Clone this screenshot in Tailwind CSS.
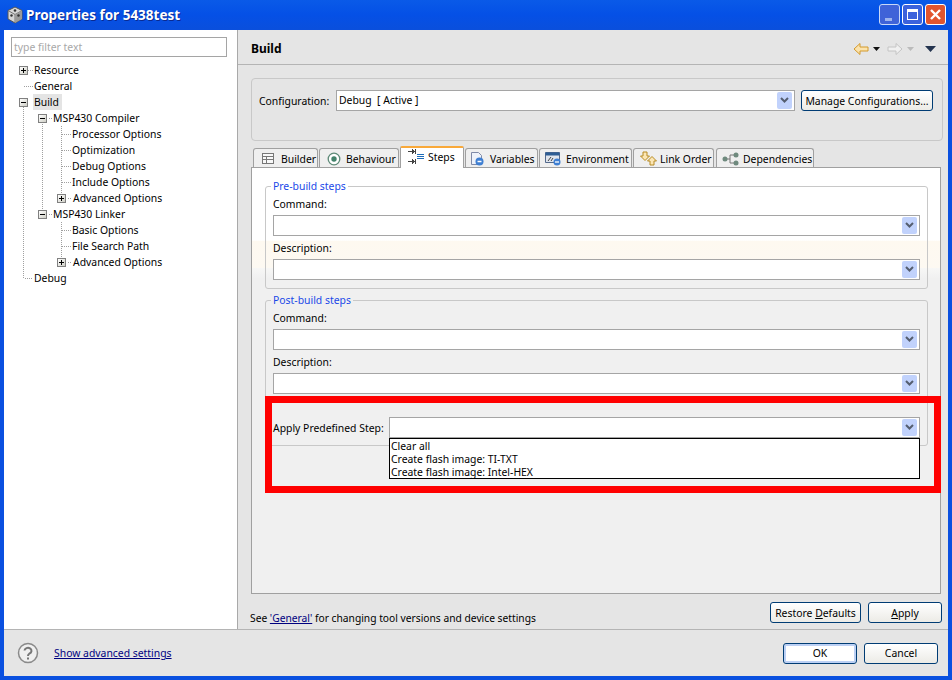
<!doctype html>
<html><head><meta charset="utf-8">
<script src="https://cdn.jsdelivr.net/npm/@tailwindcss/browser@4"></script>
</head>
<body class="m-0 overflow-hidden">
<div class="relative w-[952px] h-[680px] flex flex-col bg-[#0a50e0] font-['Noto_Sans',sans-serif] text-[10.4px] leading-[14px] text-black overflow-hidden">
  <!-- title bar -->
  <div class="h-[30px] shrink-0 flex items-center pl-[6px] pr-[6px] bg-gradient-to-b from-[#0a5ae8] via-[#0550e6] to-[#0a4fdc] text-white">
    <svg width="18" height="18" viewBox="0 0 18 18" class="mr-[2px]"><path d="M9 1l7 3.500v8.500l-7 4-7-4V4.500z" fill="#d6d6d6" stroke="#555"/><path d="M2 4.500l7 4 7-4M9 8.500V17" fill="none" stroke="#777"/><path d="M9 8.500l7-4v8.500l-7 4z" fill="#9a9a9a"/><circle cx="9" cy="4.500" r="1.300" fill="#333"/><circle cx="5.500" cy="9.500" r="1.200" fill="#333"/><circle cx="12.500" cy="9.500" r="1.200" fill="#333"/></svg>
    <span class="font-bold text-[13.5px] [text-shadow:1px_1px_0_#0a2a90]">Properties for 5438test</span>
    <div class="ml-auto flex gap-[2px] mb-[1px]">
      <div class="w-[21px] h-[21px] rounded-[3px] border border-[#c8d8f8] bg-[#3f63d8] flex items-end justify-start pl-[5px] pb-[3px]"><div class="w-[7px] h-[3px] bg-[#9db4ee]"></div></div>
      <div class="w-[21px] h-[21px] rounded-[3px] border border-white bg-[#3c62dc] flex items-center justify-center"><div class="w-[11px] h-[11px] border border-white border-t-[3px]"></div></div>
      <div class="w-[21px] h-[21px] rounded-[3px] border border-white bg-[#e2552e] flex items-center justify-center"><svg width="13" height="13" viewBox="0 0 13 13"><path d="M2 2l9 9M11 2l-9 9" stroke="#fff" stroke-width="2.400"/></svg></div>
    </div>
  </div>
  <!-- body -->
  <div class="flex-1 mx-[4px] mb-[4px] flex flex-col bg-[#e5e5e5] min-h-0">
    <div class="flex flex-1 min-h-0">
      <!-- left tree -->
      <div class="relative w-[234px] shrink-0 bg-white border-r border-[#a9a9a9] pt-[7px]">
        <div class="ml-[7px] w-[216px] h-[20px] border border-[#a5a5a5] px-[2px] flex items-center text-[#a8a8a8]">type filter text</div>
        <svg class="absolute left-0 top-0" width="233" height="290" shape-rendering="crispEdges">
          <g stroke="#a0a0a0" stroke-dasharray="1 1" fill="none">
            <path d="M19.500 75V248H29M19.500 56H29"/>
            <path d="M19.500 40H29"/>
            <path d="M38.500 94V184M45 88H49M45 184H49"/>
            <path d="M57.500 96V168M57.500 104H67M57.500 120H67M57.500 136H67M57.500 152H67"/>
            <path d="M57.500 192V232M57.500 200H67M57.500 216H67M64 168H68M64 232H68"/>
          </g>
        </svg>
        <div class="relative mt-[5px] flex flex-col">
          <div class="flex items-center h-[16px] pl-[15px]"><span class="w-[9px] h-[9px] border border-[#808080] bg-gradient-to-br from-white to-[#cfcfc6] flex items-center justify-center"><svg width="7" height="7" viewBox="0 0 7 7" shape-rendering="crispEdges"><path d="M1 3.500h5M3.500 1v5" stroke="#000"/></svg></span><span class="ml-[6px]">Resource</span></div>
          <div class="flex items-center h-[16px] pl-[30px]"><span>General</span></div>
          <div class="flex items-center h-[16px] pl-[15px]"><span class="w-[9px] h-[9px] border border-[#808080] bg-gradient-to-br from-white to-[#cfcfc6] flex items-center justify-center"><span class="w-[5px] h-[1px] bg-black"></span></span><span class="ml-[5px] px-[1px] w-[29px] h-[16px] leading-[16px] bg-[#e4e4e4]">Build</span></div>
          <div class="flex items-center h-[16px] pl-[34px]"><span class="w-[9px] h-[9px] border border-[#808080] bg-gradient-to-br from-white to-[#cfcfc6] flex items-center justify-center"><span class="w-[5px] h-[1px] bg-black"></span></span><span class="ml-[6px]">MSP430 Compiler</span></div>
          <div class="flex items-center h-[16px] pl-[68px]">Processor Options</div>
          <div class="flex items-center h-[16px] pl-[68px]">Optimization</div>
          <div class="flex items-center h-[16px] pl-[68px]">Debug Options</div>
          <div class="flex items-center h-[16px] pl-[68px]">Include Options</div>
          <div class="flex items-center h-[16px] pl-[53px]"><span class="w-[9px] h-[9px] border border-[#808080] bg-gradient-to-br from-white to-[#cfcfc6] flex items-center justify-center"><svg width="7" height="7" viewBox="0 0 7 7" shape-rendering="crispEdges"><path d="M1 3.500h5M3.500 1v5" stroke="#000"/></svg></span><span class="ml-[7px]">Advanced Options</span></div>
          <div class="flex items-center h-[16px] pl-[34px]"><span class="w-[9px] h-[9px] border border-[#808080] bg-gradient-to-br from-white to-[#cfcfc6] flex items-center justify-center"><span class="w-[5px] h-[1px] bg-black"></span></span><span class="ml-[6px]">MSP430 Linker</span></div>
          <div class="flex items-center h-[16px] pl-[68px]">Basic Options</div>
          <div class="flex items-center h-[16px] pl-[68px]">File Search Path</div>
          <div class="flex items-center h-[16px] pl-[53px]"><span class="w-[9px] h-[9px] border border-[#808080] bg-gradient-to-br from-white to-[#cfcfc6] flex items-center justify-center"><svg width="7" height="7" viewBox="0 0 7 7" shape-rendering="crispEdges"><path d="M1 3.500h5M3.500 1v5" stroke="#000"/></svg></span><span class="ml-[7px]">Advanced Options</span></div>
          <div class="flex items-center h-[16px] pl-[30px]">Debug</div>
        </div>
      </div>
      <!-- right pane -->
      <div class="flex-1 flex flex-col min-w-0 pl-[13px] pr-[7px]">
        <div class="h-[35px] shrink-0 -ml-[13px] -mr-[7px] pl-[13px] pr-[12px] pt-[3px] border-b border-[#b4b4b4] flex items-center">
          <span class="font-bold text-[12px]">Build</span>
          <div class="ml-auto flex items-center">
            <svg width="16" height="14" viewBox="0 0 16 14"><path d="M1 7l6-5.500V5h8v4H7v3.500z" fill="#fbe3ad" stroke="#d39a2c"/></svg>
            <svg width="7" height="4" viewBox="0 0 7 4" class="ml-[4px] mr-[7px]"><path d="M0 0h7L3.500 4z" fill="#111"/></svg>
            <svg width="16" height="14" viewBox="0 0 16 14"><path d="M15 7L9 1.500V5H1v4h8v3.500z" fill="#f0f0f0" stroke="#c4c4c4"/></svg>
            <svg width="7" height="4" viewBox="0 0 7 4" class="ml-[4px] mr-[11px]"><path d="M0 0h7L3.500 4z" fill="#bbb"/></svg>
            <svg width="11" height="6" viewBox="0 0 11 6"><path d="M0 0h11L5.500 6z" fill="#24344f"/></svg>
          </div>
        </div>
        <div class="mt-[13px] h-[63px] shrink-0 mr-[-2px] rounded-[4px] border border-[#c8c8c8] pl-[7px] pt-[11px] flex items-start">
          <span class="mt-[4px] w-[77px]">Configuration:</span>
          <div class="w-[459px] h-[21px] bg-white border border-[#a5a5a5] flex items-center pl-[2px] pr-[2px]"><span class="whitespace-pre mb-[1px]">Debug  [ Active ]</span><span class="ml-auto w-[15px] h-[17px] rounded-[2px] bg-[#c1d2fc] flex items-center justify-center"><svg width="9" height="7" viewBox="0 0 9 7"><path d="M1 1l3.500 3.500L8 1" fill="none" stroke="#555e70" stroke-width="2"/></svg></span></div>
          <button class="ml-[6px] w-[132px] h-[21px] rounded-[3px] border border-[#003c74] bg-gradient-to-b from-white to-[#ecebe6] text-center whitespace-nowrap">Manage Configurations...</button>
        </div>
        <!-- tabs -->
        <div class="mt-[5px] h-[21px] shrink-0 flex items-end pl-[2px] whitespace-nowrap">
          <div class="h-[19px] w-[65px] mr-[1px] pt-[1px] rounded-t-[3px] border border-b-0 border-[#a0a0a0] bg-[#efefef] flex items-center pl-[7px] gap-[6px]"><svg width="14" height="12" viewBox="0 0 14 12" shape-rendering="crispEdges"><path d="M1.500.500h11v10h-11zM1.500 3.500h11M1.500 6.500h11M5.500 3.500v7" fill="#f8f8f8" stroke="#777"/></svg><span>Builder</span></div>
          <div class="h-[19px] w-[80px] mr-[1px] pt-[1px] rounded-t-[3px] border border-b-0 border-[#a0a0a0] bg-[#efefef] flex items-center pl-[7px] gap-[5px]"><svg width="14" height="14" viewBox="0 0 14 14"><circle cx="7" cy="7" r="5.800" fill="#fff" stroke="#5e8a78" stroke-width="1.300"/><circle cx="7" cy="7" r="2.700" fill="#43836b"/></svg><span>Behaviour</span></div>
          <div class="relative h-[22px] w-[64px] mb-[-1px] border-x border-[#a0a0a0] border-t-[2px] border-t-[#f9a93a] bg-white rounded-t-[2px] flex items-center pl-[7px] gap-[4px] z-10 pb-[3px]"><svg width="16" height="17" viewBox="0 0 16 17" shape-rendering="crispEdges"><path d="M0 3.500h6M4 1.500l2 2-2 2M7.500 1v5M0 13.500h6M4 11.500l2 2-2 2M7.500 11v5" fill="none" stroke="#444"/><path d="M9 6.500h7M9 8.500h7M9 10.500h7" stroke="#1e6cb8"/></svg><span>Steps</span></div>
          <div class="h-[19px] w-[73px] mx-[1px] pt-[1px] rounded-t-[3px] border border-b-0 border-[#a0a0a0] bg-[#efefef] flex items-center pl-[4px] gap-[5px]"><svg width="15" height="15" viewBox="0 0 15 15"><path d="M1.500 1.500h7l3 3v9h-10z" fill="#eef2fa" stroke="#7f8aa8"/><circle cx="9.500" cy="10.500" r="4" fill="#3f7fd2"/><path d="M7.500 10.500h4" stroke="#fff" stroke-width="1.500"/></svg><span>Variables</span></div>
          <div class="h-[19px] w-[93px] mr-[1px] pt-[1px] rounded-t-[3px] border border-b-0 border-[#a0a0a0] bg-[#efefef] flex items-center pl-[5px] gap-[5px]"><svg width="16" height="15" viewBox="0 0 16 15"><path d="M.500 1.500h14v10H.500z" fill="#dfe4ec" stroke="#53698c"/><path d="M.500 1.500h14v3H.500z" fill="#2d5d94"/><path d="M3 10l3-4M6 10l2-3" stroke="#444"/><circle cx="12" cy="11" r="3.500" fill="#3f7fd2"/><path d="M10 11h4" stroke="#fff" stroke-width="1.300"/></svg><span>Environment</span></div>
          <div class="h-[19px] w-[81px] mr-[2px] pt-[1px] rounded-t-[3px] border border-b-0 border-[#a0a0a0] bg-[#efefef] flex items-center pl-[6px] gap-[3px]"><svg width="17" height="15" viewBox="0 0 17 15"><path d="M3 1h4v4h2.500L5 9.500.500 5H3z" fill="#fbe6b5" stroke="#b78a22"/><path d="M10 14v-4H7.500L12 5.500l4.500 4.500H14v4z" fill="#fbe6b5" stroke="#b78a22"/></svg><span>Link Order</span></div>
          <div class="h-[19px] w-[98px] pt-[1px] rounded-t-[3px] border border-b-0 border-[#a0a0a0] bg-[#efefef] flex items-center pl-[5px] gap-[4px]"><svg width="17" height="14" viewBox="0 0 17 14"><path d="M4 7h4M8 3v8M8 3h4M8 11h4" fill="none" stroke="#777"/><circle cx="3" cy="7" r="2.500" fill="#6f8a7e"/><circle cx="14" cy="3" r="2.500" fill="#6f8a7e"/><circle cx="14" cy="11" r="2.500" fill="#6f8a7e"/></svg><span>Dependencies</span></div>
        </div>
        <!-- tab content -->
        <div class="flex-1 min-h-0 flex flex-col">
          <div class="h-[427px] shrink-0 border border-[#a0a0a0] bg-[linear-gradient(to_bottom,#fff_17%,#fef9f0_17.2%,#fdf9f2_23.4%,#f7f7f6_23.6%,#f0f0f0_26%)] pl-[13px] pr-[12px] pt-[12px]">
            <fieldset class="h-[109px] rounded-[3px] border border-[#c8c8c8] pl-[7px] pr-[7px] m-0">
              <legend class="text-[#1a48e8] -ml-[2px] px-[2px] leading-[12px]">Pre-build steps</legend>
              <div class="h-[16px] mt-[5px]">Command:</div>
              <div class="mt-[2px] h-[21px] bg-white border border-[#a5a5a5] flex items-center justify-end pr-[2px]"><span class="w-[15px] h-[17px] rounded-[2px] bg-[#c1d2fc] flex items-center justify-center"><svg width="9" height="7" viewBox="0 0 9 7"><path d="M1 1l3.500 3.500L8 1" fill="none" stroke="#555e70" stroke-width="2"/></svg></span></div>
              <div class="h-[16px] mt-[5px]">Description:</div>
              <div class="mt-[2px] h-[21px] bg-white border border-[#a5a5a5] flex items-center justify-end pr-[2px]"><span class="w-[15px] h-[17px] rounded-[2px] bg-[#c1d2fc] flex items-center justify-center"><svg width="9" height="7" viewBox="0 0 9 7"><path d="M1 1l3.500 3.500L8 1" fill="none" stroke="#555e70" stroke-width="2"/></svg></span></div>
            </fieldset>
            <fieldset class="mt-[5px] h-[152px] rounded-[3px] border border-[#c8c8c8] pl-[7px] pr-[7px]">
              <legend class="text-[#1a48e8] -ml-[2px] px-[2px] leading-[12px]">Post-build steps</legend>
              <div class="h-[16px] mt-[5px]">Command:</div>
              <div class="mt-[2px] h-[21px] bg-white border border-[#a5a5a5] flex items-center justify-end pr-[2px]"><span class="w-[15px] h-[17px] rounded-[2px] bg-[#c1d2fc] flex items-center justify-center"><svg width="9" height="7" viewBox="0 0 9 7"><path d="M1 1l3.500 3.500L8 1" fill="none" stroke="#555e70" stroke-width="2"/></svg></span></div>
              <div class="h-[16px] mt-[5px]">Description:</div>
              <div class="mt-[2px] h-[21px] bg-white border border-[#a5a5a5] flex items-center justify-end pr-[2px]"><span class="w-[15px] h-[17px] rounded-[2px] bg-[#c1d2fc] flex items-center justify-center"><svg width="9" height="7" viewBox="0 0 9 7"><path d="M1 1l3.500 3.500L8 1" fill="none" stroke="#555e70" stroke-width="2"/></svg></span></div>
              <div class="mt-[23px] flex items-center">
                <span class="w-[116px] shrink-0 whitespace-nowrap">Apply Predefined Step:</span>
                <div class="relative flex-1 h-[21px] bg-white border border-[#a5a5a5] flex items-center justify-end pr-[2px]"><span class="w-[15px] h-[17px] rounded-[2px] bg-[#c1d2fc] flex items-center justify-center"><svg width="9" height="7" viewBox="0 0 9 7"><path d="M1 1l3.500 3.500L8 1" fill="none" stroke="#555e70" stroke-width="2"/></svg></span>
                  <div class="absolute left-[-1px] right-[-1px] top-[20px] h-[41px] bg-white border border-black pl-[1px] pt-[1px] leading-[13px] z-20"><div>Clear all</div><div>Create flash image: TI-TXT</div><div>Create flash image: Intel-HEX</div></div>
                </div>
              </div>
            </fieldset>
          </div>
          <div class="flex-1 flex items-start pt-[8px] -ml-[1px] whitespace-nowrap">
            <span class="mt-[9px] text-[10.25px]">See <span class="text-[#00007f] underline">'General'</span> for changing tool versions and device settings</span>
            <button class="ml-auto w-[91px] h-[21px] rounded-[3px] border border-[#003c74] bg-gradient-to-b from-white to-[#ecebe6]">Restore <span class="underline">D</span>efaults</button>
            <button class="ml-[7px] w-[74px] h-[21px] rounded-[3px] border border-[#003c74] bg-gradient-to-b from-white to-[#ecebe6] mr-[-1px]"><span class="underline">A</span>pply</button>
          </div>
        </div>
      </div>
    </div>
    <!-- bottom -->
    <div class="h-[47px] shrink-0 border-t border-[#b4b4b4] flex items-center pl-[13px] pr-[10px]">
      <svg width="22" height="22" viewBox="0 0 22 22"><circle cx="11" cy="11" r="9.500" fill="#f0f0f0" stroke="#8a8a8a" stroke-width="1.500"/><path d="M7.500 8.500a3.500 3 0 1 1 5 3c-1 .7-1.500 1.200-1.500 2.500" fill="none" stroke="#777" stroke-width="2"/><rect x="10" y="15.500" width="2" height="2" fill="#777"/></svg>
      <span class="ml-[15px] text-[#00007f] underline">Show advanced settings</span>
      <button class="ml-auto w-[74px] h-[21px] rounded-[3px] border border-[#003c74] bg-white shadow-[inset_0_0_0_2px_#bcd0f4]">OK</button>
      <button class="ml-[7px] w-[74px] h-[21px] rounded-[3px] border border-[#003c74] bg-gradient-to-b from-white to-[#ecebe6]">Cancel</button>
    </div>
  </div>
  <!-- annotation -->
  <div class="absolute left-[265px] top-[396px] w-[676px] h-[97px] border-[7px] border-[#ff0000] z-30 pointer-events-none"></div>
</div>
</body></html>
